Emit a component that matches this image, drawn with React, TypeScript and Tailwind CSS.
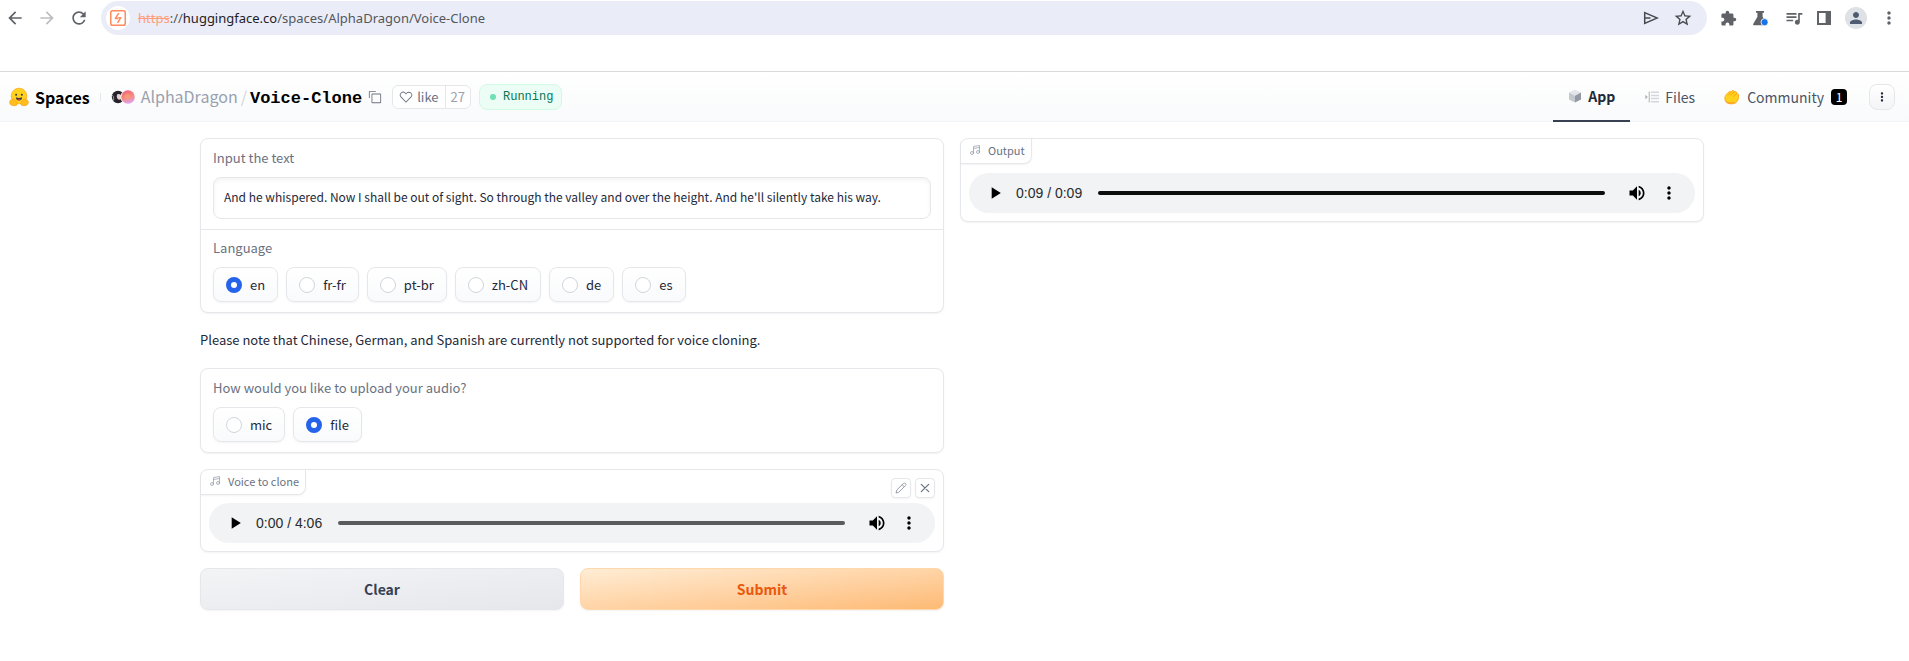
import { useId, type ReactNode } from "react";
import {
  MdArrowBack,
  MdArrowForward,
  MdRefresh,
  MdStarBorder,
  MdExtension,
  MdQueueMusic,
  MdPerson,
  MdMoreVert,
  MdPlayArrow,
  MdVolumeUp,
} from "react-icons/md";

function ProxyLogo() {
  return (
    <svg viewBox="0 0 16 16" className="size-4" fill="none" stroke="#ff8a5c">
      <rect x="0.75" y="0.75" width="14.5" height="14.5" rx="1.8" strokeWidth="1.5" />
      <path d="M8.8 3.200 5.400 8.400H8M7.600 12.800 10.800 7.700H8.200" strokeWidth="1.500" strokeLinejoin="round" />
    </svg>
  );
}

function SendIcon() {
  return (
    <svg viewBox="0 0 16 16" className="size-4" fill="none" stroke="#47494d" strokeWidth="1.5">
      <path d="M1.7 2.6 14.3 8 1.7 13.4V2.6ZM1.7 8H7.5" />
    </svg>
  );
}

function FlaskIcon() {
  return (
    <svg viewBox="0 0 16 16" className="size-4">
      <path d="M4 1h8v1.8h-1.4v4L14.8 14q.6 1.2-.8 1.2H2q-1.4 0-.8-1.2l4.2-7.2v-4H4Z" fill="#5f6368" />
      <circle cx="12.6" cy="12.2" r="3.6" fill="#1a73e8" stroke="#fff" strokeWidth=".8" />
    </svg>
  );
}

function PanelIcon() {
  return (
    <svg viewBox="0 0 16 16" className="size-4">
      <path d="M1 1h14v14H1Z" fill="#5f6368" />
      <path d="M3 3h6.6v10H3Z" fill="#fff" />
    </svg>
  );
}

function HuggingFace() {
  return (
    <svg viewBox="0 0 20 20" className="size-5">
      <circle cx="10" cy="9" r="7.8" fill="#ffd21e" stroke="#ffac1c" strokeWidth=".8" />
      <circle cx="7.1" cy="7.7" r="1" fill="#3a3b45" />
      <circle cx="12.9" cy="7.7" r="1" fill="#3a3b45" />
      <path d="M6.8 10.2q3.2 1.5 6.4 0-.4 3.2-3.2 3.2t-3.2-3.2Z" fill="#3a3b45" />
      <path d="M8.6 12.7q1.4-1.2 2.8 0-.6.7-1.4.7t-1.4-.7Z" fill="#f94040" />
      <path
        d="M1.3 13.4q.8-1.3 2-.2.2-1.9 1.5-1.3 3.5 2.6 3.5 4.600 0 2.200-2.700 2.200-4.600-.1-4.800-2.600-.4-1.700.5-2.700ZM18.700 13.400q-.8-1.300-2-.2-.2-1.900-1.500-1.300-3.500 2.600-3.500 4.600 0 2.200 2.700 2.200 4.600-.1 4.800-2.600.4-1.700-.5-2.700Z"
        fill="#ffbf1f"
        stroke="#ff9d0b"
        strokeWidth=".7"
      />
    </svg>
  );
}

function Avatars() {
  return (
    <svg viewBox="0 0 24 14" className="h-3.5 w-6">
      <defs>
        <linearGradient id="orb" x1=".3" y1="0" x2=".6" y2="1">
          <stop offset="0" stopColor="#f0657c" />
          <stop offset=".5" stopColor="#f58a80" />
          <stop offset="1" stopColor="#dca4f5" />
        </linearGradient>
      </defs>
      <circle cx="7" cy="7" r="6.200" fill="#25222a" />
      <path d="M6 4.500q2-1 4 .5v4q-2 1.500-3.500-.2-1.200-1.500-.5-4.300Z" fill="#e6d2cc" />
      <path d="M1.200 5q2 1 1.500 5.500" stroke="#a8a4ac" strokeWidth=".9" fill="none" />
      <circle cx="17" cy="7" r="7.600" fill="#fcfcfd" />
      <circle cx="17" cy="7" r="6.800" fill="url(#orb)" />
      <circle cx="16.500" cy="6.500" r="2.800" fill="#f9a06a" opacity=".7" />
    </svg>
  );
}

function CopyIcon() {
  return (
    <svg viewBox="0 0 32 32" className="size-3.5" fill="#6b7280">
      <path d="M28 10v18H10V10h18m0-2H10a2 2 0 0 0-2 2v18a2 2 0 0 0 2 2h18a2 2 0 0 0 2-2V10a2 2 0 0 0-2-2Z" />
      <path d="M4 18H2V4a2 2 0 0 1 2-2h14v2H4Z" />
    </svg>
  );
}

function HeartIcon() {
  return (
    <svg viewBox="0 0 32 32" className="size-3.5" fill="#6b7280">
      <path d="M22.450 6a5.470 5.470 0 0 1 3.910 1.640 5.700 5.700 0 0 1 0 8L16 26.130 5.640 15.640a5.700 5.700 0 0 1 0-8 5.480 5.480 0 0 1 7.820 0L16 10.240l2.530-2.580A5.440 5.440 0 0 1 22.450 6m0-2a7.470 7.470 0 0 0-5.340 2.240L16 7.360l-1.110-1.120a7.490 7.490 0 0 0-10.680 0 7.720 7.720 0 0 0 0 10.820L16 29l11.790-11.940a7.720 7.720 0 0 0 0-10.820A7.490 7.490 0 0 0 22.450 4Z" />
    </svg>
  );
}

function CubeIcon() {
  return (
    <svg viewBox="0 0 14 14" className="size-3.5">
      <path d="M7 .8 13 3.600 7 6.700 1 3.600Z" fill="#e3e5e9" />
      <path d="M1 3.600 7 6.700v6.800L1 10.500Z" fill="#c3c7ce" />
      <path d="M13 3.600 7 6.700v6.800l6-3Z" fill="#9399a4" />
    </svg>
  );
}

function FilesIcon() {
  return (
    <svg viewBox="0 0 14 14" className="size-3.5">
      <path d="M.3 4.800 2.800 7 .3 9.200Z" fill="#aab0ba" />
      <path d="M4.300 1.500v11" stroke="#c3c8cf" strokeWidth="1.400" />
      <path d="M6 2.300h8M6 5.400h8M6 8.500h8M6 11.700h8" stroke="#d3d6dc" strokeWidth="1.500" />
    </svg>
  );
}

function CommunityIcon() {
  return (
    <svg viewBox="0 0 16 16" className="size-4">
      <path
        d="M.9 10.500q-.5-3 1.500-5.200 1.500-1.700 3-2.700 1.200-.5 1.500.4.900-1.600 2.300-1.500 1.100.2 1 1.300 1.700-1 2.500.5.2.7 0 1.300 1.700 0 1.900 1.300.7 5-3 8.100-3.500 1.800-7.800.3Q1.400 13 .9 10.500Z"
        fill="#ffd21e"
        stroke="#ffa726"
        strokeWidth=".9"
      />
      <path d="m7 3-2.500 3M10.200 2.800 7 6.300M12.700 4.600 9.600 7.600" stroke="#ff9d0b" strokeWidth=".9" fill="none" strokeLinecap="round" />
      <path d="M1.200 11.500q1.500 3.500 5.500 3.200 3 .2 5-1.500-2.500.3-5 0-3.500-.2-5.500-1.700Z" fill="#ffa726" />
    </svg>
  );
}

function NotesIcon() {
  return (
    <svg viewBox="0 0 24 24" className="size-3" fill="none" stroke="#9ca3af" strokeWidth="1.600" strokeLinecap="round" strokeLinejoin="round">
      <path d="M9 18V5l12-2v13M9 9l12-2" />
      <circle cx="6" cy="18" r="3" />
      <circle cx="18" cy="16" r="3" />
    </svg>
  );
}

function PencilIcon() {
  return (
    <svg viewBox="0 0 24 24" className="size-3" fill="none" stroke="#8a919e" strokeWidth="1.700" strokeLinecap="round" strokeLinejoin="round">
      <path d="M17 3a2.828 2.828 0 1 1 4 4L7.500 20.500 2 22l1.500-5.500Z" />
      <path d="m14.500 5.500 4 4" />
    </svg>
  );
}

function CloseIcon() {
  return (
    <svg viewBox="0 0 12 12" className="size-3" fill="none" stroke="#6b7280" strokeWidth="1.200" strokeLinecap="round">
      <path d="m2.300 2.300 7.400 7.400M9.700 2.300 2.300 9.700" />
    </svg>
  );
}

function BrowserBar() {
  return (
    <div className="flex h-[36px] items-center pr-[10px] pl-[5px] text-[#5f6368]">
      <div className="flex w-[96px] gap-3">
        <button aria-label="Back" className="flex size-5 items-center justify-center"><MdArrowBack size={20} /></button>
        <button aria-label="Forward" className="flex size-5 items-center justify-center text-[#bcbec1]"><MdArrowForward size={20} /></button>
        <button aria-label="Reload" className="flex size-5 items-center justify-center"><MdRefresh size={20} /></button>
      </div>
      <div className="flex h-[34px] flex-1 items-center rounded-full bg-[#eaedf8] pr-[14px] pl-[5px]">
        <span className="flex size-6 items-center justify-center rounded-full bg-white"><ProxyLogo /></span>
        <a href="#" className="ml-2 flex-1 font-['Noto_Sans',sans-serif] text-[13px] leading-5 text-[#54565b]">
          <span className="text-[#ff9f7a] line-through">https</span>://<span className="text-[#1f2024]">huggingface.co</span>/spaces/AlphaDragon/Voice-Clone
        </a>
        <button aria-label="Share"><SendIcon /></button>
        <button aria-label="Bookmark" className="ml-[14px] text-[#47494d]"><MdStarBorder size={20} /></button>
      </div>
      <div className="ml-[13px] flex items-center">
        <button aria-label="Extensions" className="w-8"><MdExtension size={17} /></button>
        <button aria-label="Labs" className="w-8"><FlaskIcon /></button>
        <button aria-label="Media" className="w-8"><MdQueueMusic size={20} /></button>
        <button aria-label="Side panel" className="w-[29px]"><PanelIcon /></button>
        <button aria-label="Profile" className="flex size-[22px] items-center justify-center rounded-full bg-[#dee1e6] text-[#4f5b70]"><MdPerson size={18} /></button>
        <button aria-label="Menu" className="ml-3"><MdMoreVert size={20} /></button>
      </div>
    </div>
  );
}

function SpaceHeader() {
  return (
    <header className="flex h-[51px] items-stretch border-t border-b border-t-[#d8d9da] border-b-gray-100 bg-linear-to-b from-white to-[#f9fafb] pr-[14px] pl-[9px]">
      <div className="flex flex-1 items-center">
        <a href="#" className="flex items-center gap-[6px] text-[16px] font-bold leading-6 text-black"><HuggingFace />Spaces</a>
        <span className="mx-[10px] h-2 w-px bg-gray-200" />
        <Avatars />
        <div className="ml-[6px] flex items-baseline pt-px text-[16px] leading-6">
          <a href="#" className="text-gray-400">AlphaDragon</a>
          <span className="mx-[3px] text-gray-300">/</span>
          <h1 className="font-['Liberation_Mono',monospace] text-[17px] font-bold leading-6 text-black">Voice-Clone</h1>
        </div>
        <button aria-label="Copy name" className="ml-[6px]"><CopyIcon /></button>
        <div className="ml-[10px] flex h-6 items-stretch rounded-md border border-gray-200 bg-white text-[13px] leading-5">
          <button className="flex items-center gap-1 px-[6px] text-gray-500"><HeartIcon />like</button>
          <button className="border-l border-gray-200 px-[5px] text-gray-400">27</button>
        </div>
        <div className="ml-2 flex h-[26px] items-center gap-[7px] rounded-lg border border-[#d1fae5] bg-[#ecfdf5] pr-2 pl-[10px] font-['Liberation_Mono',monospace] text-[12px] text-[#047857]">
          <span className="size-[6px] rounded-full bg-[#6ee0b4]" />Running
        </div>
      </div>
      <nav className="flex items-stretch text-[14px] leading-6 text-gray-600">
        <a href="#" className="-mb-px flex items-center gap-[6px] border-b-2 border-[#374151] px-[15px] font-bold text-gray-800"><CubeIcon />App</a>
        <a href="#" className="flex items-center gap-[6px] px-[15px]"><FilesIcon />Files</a>
        <a href="#" className="flex items-center gap-[7px] px-[14px]">
          <CommunityIcon />Community
          <span className="flex size-4 items-center justify-center rounded bg-black text-[12px] text-white">1</span>
        </a>
        <button aria-label="More options" className="ml-2 flex size-[26px] items-center justify-center self-center rounded-lg border border-gray-200 bg-linear-to-b from-white to-gray-100 text-gray-800">
          <MdMoreVert size={14} />
        </button>
      </nav>
    </header>
  );
}

function Card({ children }: { children: ReactNode }) {
  return <section className="relative rounded-lg border border-gray-200 bg-white shadow-[0_1px_2px_rgba(0,0,0,0.05)]">{children}</section>;
}

function RadioGroup({ legend, options, checked }: { legend: string; options: string[]; checked: string }) {
  const name = useId();
  return (
    <fieldset>
      <legend className="mb-[10px] text-[13px] leading-[18px] text-gray-500">{legend}</legend>
      <div className="flex flex-wrap gap-2">
        {options.map((option) => (
          <label key={option} className="flex h-[35px] items-center gap-2 rounded-lg border border-gray-200 bg-linear-to-b from-white to-gray-50 px-3 text-[13px] leading-5 text-gray-800 shadow-[0_1px_2px_rgba(0,0,0,0.05)]">
            <input
              type="radio"
              name={name}
              defaultChecked={option === checked}
              className="size-4 appearance-none rounded-full border border-gray-300 bg-white checked:border-[5px] checked:border-[#2563eb]"
            />
            {option}
          </label>
        ))}
      </div>
    </fieldset>
  );
}

function AudioPlayer({ time, trackClass }: { time: string; trackClass: string }) {
  return (
    <div className="flex h-10 items-center rounded-full bg-[#f1f3f4] pr-4 pl-4 text-black">
      <button aria-label="Play" className="mr-[11px]"><MdPlayArrow size={20} /></button>
      <span className="text-[14px] leading-5 font-['Liberation_Sans',sans-serif] text-[#2b2c2d]">{time}</span>
      <input
        type="range"
        aria-label="Position"
        defaultValue={0}
        className={`ml-4 h-1 min-w-0 flex-1 appearance-none rounded-full [&::-webkit-slider-thumb]:size-0 [&::-webkit-slider-thumb]:appearance-none ${trackClass}`}
      />
      <button aria-label="Mute" className="ml-[22px]"><MdVolumeUp size={20} /></button>
      <button aria-label="Player menu" className="ml-3"><MdMoreVert size={20} /></button>
    </div>
  );
}

function BlockLabel({ children }: { children: ReactNode }) {
  return (
    <div className="absolute top-0 left-0 flex h-[25px] items-center gap-[7px] rounded-br-lg border-r border-b border-gray-200 pr-[6px] pb-[2px] pl-2 text-[11px] leading-4 text-gray-500 shadow-[0_1px_2px_rgba(0,0,0,0.05)]">
      <NotesIcon />
      {children}
    </div>
  );
}

export default function App() {
  return (
    <div className="bg-white font-['Noto_Sans_CJK_SC',sans-serif]">
      <BrowserBar />
      <div className="pt-[35px]">
        <SpaceHeader />
      </div>
      <main className="pt-4 pr-[5px] pb-12">
        <div className="mx-auto grid max-w-[1536px] grid-cols-2 items-start gap-4 px-4">
          <div className="flex min-w-0 flex-col gap-4">
            <Card>
              <div className="border-b border-gray-200 px-3 py-[10px]">
                <label htmlFor="prompt" className="mb-[10px] block text-[13px] leading-[18px] text-gray-500">Input the text</label>
                <input
                  id="prompt"
                  type="text"
                  defaultValue="And he whispered. Now I shall be out of sight. So through the valley and over the height. And he'll silently take his way."
                  className="block h-[42px] w-full rounded-lg border border-gray-200 px-[10px] pb-1 text-[12px] leading-5 text-gray-800 shadow-[inset_0_2px_4px_rgba(0,0,0,0.05)] outline-none"
                />
              </div>
              <div className="px-3 pt-[9px] pb-[10px]">
                <RadioGroup legend="Language" options={["en", "fr-fr", "pt-br", "zh-CN", "de", "es"]} checked="en" />
              </div>
            </Card>
            <p className="pb-[2px] text-[13px] leading-[21px] text-gray-800">Please note that Chinese, German, and Spanish are currently not supported for voice cloning.</p>
            <Card>
              <div className="px-3 py-[10px]">
                <RadioGroup legend="How would you like to upload your audio?" options={["mic", "file"]} checked="file" />
              </div>
            </Card>
            <Card>
              <BlockLabel>Voice to clone</BlockLabel>
              <div className="absolute top-2 right-2 flex gap-1">
                <button aria-label="Edit" className="flex size-5 items-center justify-center rounded border border-gray-200 shadow-[0_1px_2px_rgba(0,0,0,0.05)]"><PencilIcon /></button>
                <button aria-label="Clear audio" className="flex size-5 items-center justify-center rounded border border-gray-200 shadow-[0_1px_2px_rgba(0,0,0,0.05)]"><CloseIcon /></button>
              </div>
              <div className="px-2 pt-[33px] pb-2">
                <AudioPlayer time="0:00 / 4:06" trackClass="bg-[#5a5b5c]" />
              </div>
            </Card>
            <div className="grid grid-cols-2 gap-4">
              <button className="h-[42px] rounded-lg border border-gray-200 bg-linear-to-br from-gray-100 to-gray-200 text-[14px] font-bold text-gray-700 shadow-[0_1px_2px_rgba(0,0,0,0.05)]">Clear</button>
              <button className="h-[42px] rounded-lg border border-[#fed7aa] bg-linear-to-br from-[#ffedd5] to-[#fdba74] text-[14px] font-bold text-[#ea580c] shadow-[0_1px_2px_rgba(0,0,0,0.05)]">Submit</button>
            </div>
          </div>
          <Card>
            <BlockLabel>Output</BlockLabel>
            <div className="px-2 pt-[34px] pb-2">
              <AudioPlayer time="0:09 / 0:09" trackClass="bg-[#0c0d0d]" />
            </div>
          </Card>
        </div>
      </main>
    </div>
  );
}
